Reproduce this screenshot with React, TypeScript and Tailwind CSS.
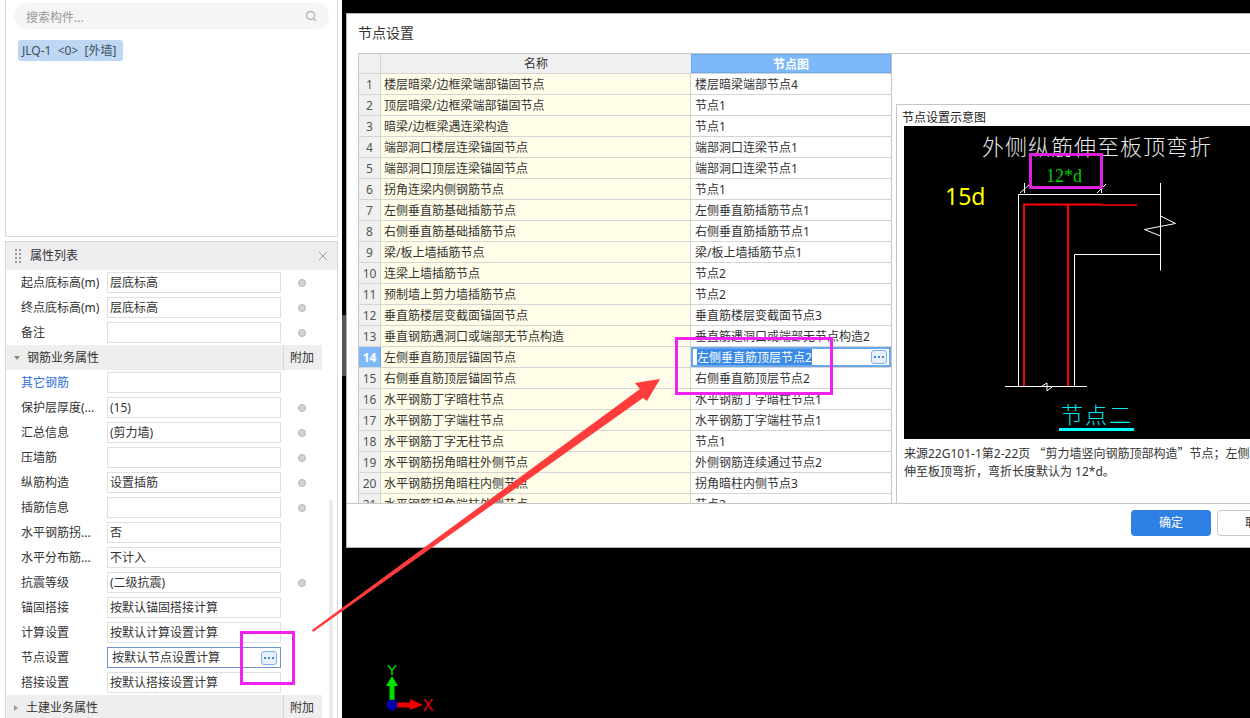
import React from "react";

const rows: [string, string][] = [
  ["楼层暗梁/边框梁端部锚固节点", "楼层暗梁端部节点4"],
  ["顶层暗梁/边框梁端部锚固节点", "节点1"],
  ["暗梁/边框梁遇连梁构造", "节点1"],
  ["端部洞口楼层连梁锚固节点", "端部洞口连梁节点1"],
  ["端部洞口顶层连梁锚固节点", "端部洞口连梁节点1"],
  ["拐角连梁内侧钢筋节点", "节点1"],
  ["左侧垂直筋基础插筋节点", "左侧垂直筋插筋节点1"],
  ["右侧垂直筋基础插筋节点", "右侧垂直筋插筋节点1"],
  ["梁/板上墙插筋节点", "梁/板上墙插筋节点1"],
  ["连梁上墙插筋节点", "节点2"],
  ["预制墙上剪力墙插筋节点", "节点2"],
  ["垂直筋楼层变截面锚固节点", "垂直筋楼层变截面节点3"],
  ["垂直钢筋遇洞口或端部无节点构造", "垂直筋遇洞口或端部无节点构造2"],
  ["左侧垂直筋顶层锚固节点", "左侧垂直筋顶层节点2"],
  ["右侧垂直筋顶层锚固节点", "右侧垂直筋顶层节点2"],
  ["水平钢筋丁字暗柱节点", "水平钢筋丁字暗柱节点1"],
  ["水平钢筋丁字端柱节点", "水平钢筋丁字端柱节点1"],
  ["水平钢筋丁字无柱节点", "节点1"],
  ["水平钢筋拐角暗柱外侧节点", "外侧钢筋连续通过节点2"],
  ["水平钢筋拐角暗柱内侧节点", "拐角暗柱内侧节点3"],
  ["水平钢筋拐角端柱外侧节点", "节点2"],
];

type Prop = { label: string; value?: string; radio?: boolean; blue?: boolean; active?: boolean };

const group0: Prop[] = [
  { label: "起点底标高(m)", value: "层底标高", radio: true },
  { label: "终点底标高(m)", value: "层底标高", radio: true },
  { label: "备注", value: "", radio: true },
];

const group1: Prop[] = [
  { label: "其它钢筋", value: "", blue: true },
  { label: "保护层厚度(...", value: "(15)", radio: true },
  { label: "汇总信息", value: "(剪力墙)", radio: true },
  { label: "压墙筋", value: "", radio: true },
  { label: "纵筋构造", value: "设置插筋", radio: true },
  { label: "插筋信息", value: "", radio: true },
  { label: "水平钢筋拐...", value: "否" },
  { label: "水平分布筋...", value: "不计入" },
  { label: "抗震等级", value: "(二级抗震)", radio: true },
  { label: "锚固搭接", value: "按默认锚固搭接计算" },
  { label: "计算设置", value: "按默认计算设置计算" },
  { label: "节点设置", value: "按默认节点设置计算", active: true },
  { label: "搭接设置", value: "按默认搭接设置计算" },
];

function MoreButton() {
  return (
    <span className="flex h-[14px] w-[16px] items-center justify-center gap-[2px] rounded-[3px] border border-[#7fb0ea] bg-[#e9f0fb]">
      <i className="block h-[2px] w-[2px] bg-[#3d86e0]" />
      <i className="block h-[2px] w-[2px] bg-[#3d86e0]" />
      <i className="block h-[2px] w-[2px] bg-[#3d86e0]" />
    </span>
  );
}

function PropRow({ p }: { p: Prop }) {
  return (
    <div className="flex h-[25px] items-center pl-[15px]">
      <div className={`w-[86px] shrink-0 whitespace-nowrap ${p.blue ? "text-[#2f6fe0]" : ""}`}>{p.label}</div>
      <div
        className={`flex h-[21px] w-[174px] shrink-0 items-center justify-between border ${
          p.active ? "border-[#6f93cf] pl-[4px] pr-[3px]" : "border-[#e0e0e0] pl-[2px]"
        }`}
      >
        <span className="whitespace-nowrap">{p.value}</span>
        {p.active && <MoreButton />}
      </div>
      <div className="flex w-[41px] justify-center">
        {p.radio && <span className="block h-[8px] w-[8px] rounded-full border border-[#b5b5b5] bg-[#d4d4d4]" />}
      </div>
    </div>
  );
}

function Section({ label, open }: { label: string; open?: boolean }) {
  return (
    <div className="flex h-[25px] items-center bg-[#eeeeee]">
      <div className="flex w-[277px] items-center pl-[8px]">
        {open ? (
          <span className="mr-[7px] block h-0 w-0 border-x-[3px] border-t-[4px] border-x-transparent border-t-[#888]" />
        ) : (
          <span className="mr-[8px] block h-0 w-0 border-y-[3px] border-l-[4px] border-y-transparent border-l-[#999]" />
        )}
        <span className="whitespace-nowrap">{label}</span>
      </div>
      <div className="flex h-full flex-1 items-center justify-center border-l border-[#d8d8d8] pr-[2px]">附加</div>
    </div>
  );
}

function LeftPanel() {
  return (
    <div className="h-full w-[342px] shrink-0 overflow-hidden bg-white pl-[5px] text-[12px] text-[#333]">
      <div className="h-[237px] w-[333px] border-x border-b border-[#d9d9d9] pr-[8px] pl-[8px] pt-[3px]">
        <div className="flex h-[26px] items-center justify-between rounded-full bg-[#f5f5f5] pr-[12px] pl-[12px] text-[#999]">
          <span className="pt-[3px]">搜索构件...</span>
          <svg width="12" height="12" viewBox="0 0 12 12" fill="none" stroke="#b4b4b4" strokeWidth="1.4">
            <circle cx="5.5" cy="5.5" r="4" />
            <path d="M8.5 8.5L11 11" />
          </svg>
        </div>
        <div className="mt-[11px] ml-[4px] flex h-[21px] w-[105px] items-center whitespace-nowrap rounded-[3px] bg-[#bed7f2] pl-[4px] text-[#40505f]">
          JLQ-1&nbsp;&nbsp;&lt;0&gt;&nbsp;&nbsp;[外墙]
        </div>
      </div>
      <div className="mt-[4px] h-[480px] w-[333px] border-x border-t border-[#d9d9d9]">
        <div className="flex h-[28px] items-center justify-between bg-[#eeeef0] pr-[9px] pl-[9px]">
          <div className="flex items-center">
            <span className="mr-[9px] grid grid-cols-2 gap-x-[2px] gap-y-[2px]">
              {[0, 1, 2, 3, 4, 5, 6, 7].map((i) => (
                <i key={i} className="block h-[2px] w-[2px] bg-[#999]" />
              ))}
            </span>
            <span className="text-[12px]">属性列表</span>
          </div>
          <svg width="10" height="10" viewBox="0 0 10 10" stroke="#a0a0a0" strokeWidth="1">
            <path d="M1 1L9 9M9 1L1 9" />
          </svg>
        </div>
        <div className="flex">
          <div className="w-[316px] shrink-0">
            {group0.map((p) => (
              <PropRow key={p.label} p={p} />
            ))}
            <Section label="钢筋业务属性" open />
            {group1.map((p) => (
              <PropRow key={p.label} p={p} />
            ))}
            <Section label="土建业务属性" />
          </div>
          <div className="w-[15px] pl-[7px]">
            <div className="mt-[230px] h-[250px] w-[4px] bg-[#ececec]" />
          </div>
        </div>
      </div>
    </div>
  );
}

function NodeTable() {
  return (
    <div className="h-[450px] w-[534px] shrink-0 overflow-hidden border-x border-t border-[#c6c6c6] text-[12px]">
      <div className="flex h-[20px] border-b border-[#d4d4d4]">
        <div className="w-[22px] shrink-0 border-r border-[#d4d4d4] bg-[#f0f0f0]" />
        <div className="flex w-[310px] shrink-0 items-center justify-center bg-[#f0f0f0]">名称</div>
        <div className="flex flex-1 items-center justify-center border border-[#6aa9ee] bg-[#7db8fa] pt-[2px] font-bold text-white">
          节点图
        </div>
      </div>
      {rows.map(([name, val], i) => {
        const sel = i === 13;
        return (
          <div key={i} className="flex h-[21px] border-b border-[#d4d4d4]">
            <div
              className={`flex w-[22px] shrink-0 items-center justify-center border-r pt-[2px] ${
                sel
                  ? "border-[#6aa9ee] bg-[#7db8fa] font-bold text-white"
                  : "border-[#d4d4d4] bg-[#f0f0f0] text-[#555]"
              }`}
            >
              {i + 1}
            </div>
            <div className="flex w-[310px] shrink-0 items-center whitespace-nowrap border-r border-[#d4d4d4] bg-[#fffde8] pl-[3px] pt-[2px]">
              {name}
            </div>
            {sel ? (
              <div className="flex flex-1 items-center justify-between border-2 border-[#6aa9ee] pr-[2px] pl-[4px]">
                <span className="h-[16px] whitespace-nowrap bg-[#3b8ae6] leading-[18px] text-white">{val}</span>
                <MoreButton />
              </div>
            ) : (
              <div className="flex flex-1 items-center whitespace-nowrap pl-[4px] pt-[2px]">{val}</div>
            )}
          </div>
        );
      })}
    </div>
  );
}

function Diagram() {
  return (
    <svg width="346" height="313" viewBox="904 126 346 313" className="block" fill="none">
      <text x="982" y="155" fontSize="22" letterSpacing="1" fill="#e8e8e8" fontWeight="300">
        外侧纵筋伸至板顶弯折
      </text>
      <text x="1046" y="182" fontSize="18" fill="#00d000" fontFamily="'Liberation Serif',serif">
        12*d
      </text>
      <text x="945" y="205" fontSize="23" fill="#ffff00">
        15d
      </text>
      <g stroke="#ffffff" strokeWidth="1">
        <path d="M1018.5 194.5V386.5M1018.5 194.5H1160.5M1160.5 183V270.5M1074.5 254.5H1160.5M1074.5 254.5V386.5M1005 386.5H1087" />
        <path d="M1160.5 216L1175.5 223.5L1144.5 229.5L1160.5 236" />
        <path d="M1020 193L1030 184M1024.5 183V193M1097 193L1106 184M1101.5 183V193" />
        <path d="M1042 386L1047 383L1047 391L1052 387" />
      </g>
      <g stroke="#ff0000">
        <path d="M1024 204V386M1068 205V386" strokeWidth="2" />
        <path d="M1023 204.5H1101" strokeWidth="2" />
        <path d="M1100 205H1137" strokeWidth="1.5" />
      </g>
      <text x="1061" y="423" fontSize="22" letterSpacing="2" fill="#00e8f0" fontWeight="300">
        节点二
      </text>
      <rect x="1059" y="428" width="75" height="3" fill="#00ffff" />
    </svg>
  );
}

function Dialog() {
  return (
    <div className="mt-[13px] ml-[4px] flex h-[535px] w-[1000px] flex-col border border-[#b0b0b0] bg-white text-[12px] text-[#333]">
      <div className="flex h-[39px] shrink-0 items-center pb-[3px] pl-[11px] text-[14px]">节点设置</div>
      <div className="flex h-[450px] shrink-0 pl-[11px]">
        <NodeTable />
        <div className="flex-1 border-t border-[#c6c6c6] pl-[4px] pt-[50px]">
          <div className="h-[399px] border-l border-t border-[#c6c6c6] pl-[5px]">
            <div className="h-[21px] pt-[3px] leading-[20px] text-[#222]">节点设置示意图</div>
            <div className="ml-[2px] w-[346px] overflow-hidden bg-black">
              <Diagram />
            </div>
            <div className="ml-[2px] mt-[5px] w-[346px] overflow-hidden whitespace-nowrap leading-[18px]">
              <div>
                来源22G101-1第2-22页 <span className="font-['Noto_Sans_CJK_SC',sans-serif]">“剪力墙竖向钢筋顶部构造”节点；左侧纵筋</span>
              </div>
              <div>伸至板顶弯折，弯折长度默认为 12*d。</div>
            </div>
          </div>
        </div>
      </div>
      <div className="flex flex-1 items-start border-t border-[#c6c6c6] pl-[784px] pt-[6px]">
        <div className="flex h-[26px] w-[80px] items-center justify-center rounded-[4px] bg-[#2f80e4] text-white">确定</div>
        <div className="ml-[6px] flex h-[26px] w-[80px] items-center justify-center rounded-[4px] border border-[#c8c8c8]">取消</div>
      </div>
    </div>
  );
}

function Axis() {
  return (
    <svg className="absolute left-[40px] top-[660px]" width="60" height="58" viewBox="382 660 60 58">
      <path d="M389.5 700V686H386L392 676L398 686H394.5V700Z" fill="#00e000" />
      <path d="M396 702.5H410V699L423 705L410 710V707.5H396Z" fill="#f00000" />
      <circle cx="392" cy="705" r="5.5" fill="#0000a8" />
      <text x="392" y="675" fontSize="15" textAnchor="middle" fill="#00e000" fontFamily="'Liberation Sans',sans-serif">Y</text>
      <text x="428" y="711" fontSize="16" textAnchor="middle" fill="#f00000" fontFamily="'Liberation Sans',sans-serif">X</text>
    </svg>
  );
}

export default function App() {
  return (
    <div className="relative flex h-[718px] w-[1250px] overflow-hidden bg-black font-['Noto_Sans','Noto_Sans_CJK_SC',sans-serif]">
      <LeftPanel />
      <div className="relative h-full flex-1 overflow-hidden bg-black">
        <div className="absolute left-0 top-[315px] h-[61px] w-[4px] bg-[#555555]" />
        <Dialog />
        <Axis />
      </div>
      <svg className="pointer-events-none absolute left-0 top-0" width="1250" height="718" viewBox="0 0 1250 718">
        <polygon points="660,379 635,383 640,389 312,630 313,632 643,398 647,401" fill="#ff3b3b" />
      </svg>
      <div className="absolute left-[1029px] top-[153px] h-[36px] w-[74px] border-[3px] border-[#dc22dc]" />
      <div className="absolute left-[675px] top-[337px] h-[58px] w-[158px] border-[3px] border-[#f022f0]" />
      <div className="absolute left-[240px] top-[631px] h-[54px] w-[55px] border-[3px] border-[#f022f0]" />
    </div>
  );
}
